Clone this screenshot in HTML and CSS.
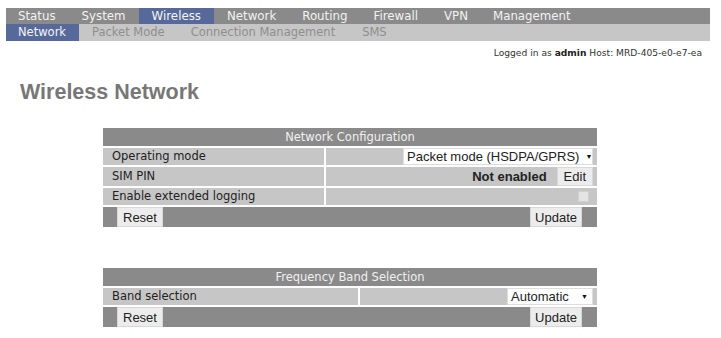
FILE: index.html
```html
<!DOCTYPE html>
<html>
<head>
<meta charset="utf-8">
<link rel="stylesheet" href="styles.css">
</head>
<body>
<div class="nav nav-main">
  <span class="item">Status</span><span class="item">System</span><span class="item active">Wireless</span><span class="item">Network</span><span class="item">Routing</span><span class="item">Firewall</span><span class="item">VPN</span><span class="item">Management</span>
</div>
<div class="nav nav-sub">
  <span class="item active">Network</span><span class="item">Packet Mode</span><span class="item">Connection Management</span><span class="item">SMS</span>
</div>
<div class="login">Logged in as <b>admin</b> Host: MRD-405-e0-e7-ea</div>
<h1 class="title">Wireless Network</h1>

<table class="cfg cfg-first">
  <tr><th colspan="2">Network Configuration</th></tr>
  <tr>
    <td class="label l1">Operating mode</td>
    <td class="value"><span class="select sel-mode">Packet mode (HSDPA/GPRS)<span class="arrow">▼</span></span></td>
  </tr>
  <tr class="tall">
    <td class="label">SIM PIN</td>
    <td class="value"><b class="status">Not enabled</b><button class="btn btn-edit">Edit</button></td>
  </tr>
  <tr>
    <td class="label">Enable extended logging</td>
    <td class="value"><span class="check"></span></td>
  </tr>
  <tr class="actions">
    <td colspan="2"><div class="bar"><button class="btn btn-reset">Reset</button><button class="btn btn-update">Update</button></div></td>
  </tr>
</table>

<table class="cfg cfg-second">
  <tr><th colspan="2">Frequency Band Selection</th></tr>
  <tr>
    <td class="label l2">Band selection</td>
    <td class="value"><span class="select sel-band">Automatic<span class="arrow">▼</span></span></td>
  </tr>
  <tr class="actions">
    <td colspan="2"><div class="bar"><button class="btn btn-reset">Reset</button><button class="btn btn-update">Update</button></div></td>
  </tr>
</table>
</body>
</html>
```

FILE: styles.css
```css
html, body {
  margin: 0;
  padding: 0;
  background: #fff;
}
body {
  padding: 8px 11px 0 6px;
  font-family: "DejaVu Sans", Verdana, sans-serif;
}
.nav {
  display: flex;
  white-space: nowrap;
}
.nav-main {
  background: #8a8a8a;
  color: #f2f2f2;
  height: 16px;
  line-height: 16px;
  font-size: 11.8px;
}
.nav-sub {
  background: #c6c6c6;
  color: #8e8e8e;
  height: 17px;
  line-height: 17px;
  font-size: 11.5px;
}
.nav .item {
  padding: 0 13px;
}
.nav .item:first-child { padding-left: 12px; }
.nav-main .item:last-child { padding-left: 12px; }
.nav-sub .item:last-child { padding-left: 14px; }
.nav .item.active {
  background: #57699a;
  color: #f4f4f4;
}
.login {
  text-align: right;
  font-size: 9.15px;
  color: #333;
  margin-top: 6px;
  padding-right: 8px;
  line-height: 13px;
}
.login b { color: #222; }
.title {
  font-family: "Liberation Sans", Arial, sans-serif;
  font-size: 21.5px;
  font-weight: bold;
  color: #777;
  margin: 19px 0 0 14px;
  line-height: 26px;
}
.cfg {
  border-collapse: separate;
  border-spacing: 2px;
  width: 498px;
  margin-left: 95px;
  font-size: 11.5px;
  color: #222;
}
.cfg-first { margin-top: 21px; }
.cfg-second { margin-top: 37px; }
.cfg th {
  background: #8a8a8a;
  color: #f0f0f0;
  font-weight: normal;
  height: 18px;
  padding: 0;
  line-height: 18px;
}
.cfg td {
  padding: 0;
  height: 17px;
}
.cfg .tall td { height: 19px; }
.cfg .label {
  background: #c6c6c6;
  padding-left: 9px;
  line-height: 17px;
  white-space: nowrap;
}
.cfg .l1 { width: 212px; }
.cfg .l2 { width: 246px; }
.cfg .value {
  background: #c6c6c6;
  text-align: right;
  padding-right: 4px;
  line-height: 0;
  white-space: nowrap;
}
.select {
  display: inline-flex;
  align-items: center;
  justify-content: space-between;
  box-sizing: border-box;
  height: 17px;
  background: #fff;
  border: 1px solid #ddd;
  font-family: "Liberation Sans", Arial, sans-serif;
  font-size: 13px;
  line-height: 15px;
  color: #222;
  padding: 0 4px 0 3px;
  vertical-align: middle;
  white-space: nowrap;
}
.sel-mode { width: 190px; }
.sel-band { width: 86px; }
.arrow {
  font-size: 7px;
  color: #111;
  margin-left: 6px;
}
.status {
  font-family: "Liberation Sans", Arial, sans-serif;
  font-size: 13px;
  line-height: 19px;
  vertical-align: middle;
  margin-right: 10px;
}
.btn {
  font-family: "Liberation Sans", Arial, sans-serif;
  font-size: 13px;
  color: #222;
  background: #ececec;
  border: 1px solid #d8d8d8;
  border-radius: 0;
  height: 19px;
  padding: 0 4px;
  margin: 0;
  vertical-align: middle;
  line-height: 17px;
}
.btn-edit { padding: 0 6px; }
.check {
  display: inline-block;
  width: 9px;
  height: 9px;
  background: #e4e4e4;
  border: 1px solid #d0d0d0;
  vertical-align: middle;
  margin-right: 4px;
}
.actions td {
  background: #8a8a8a;
  height: 20px;
}
.bar {
  display: flex;
  justify-content: space-between;
  align-items: center;
  padding: 0 15px 0 14px;
}
.bar .btn { height: 20px; }
.bar .btn-reset { padding: 0 5px; }
.bar .btn-update { padding: 0 4px; }
```
